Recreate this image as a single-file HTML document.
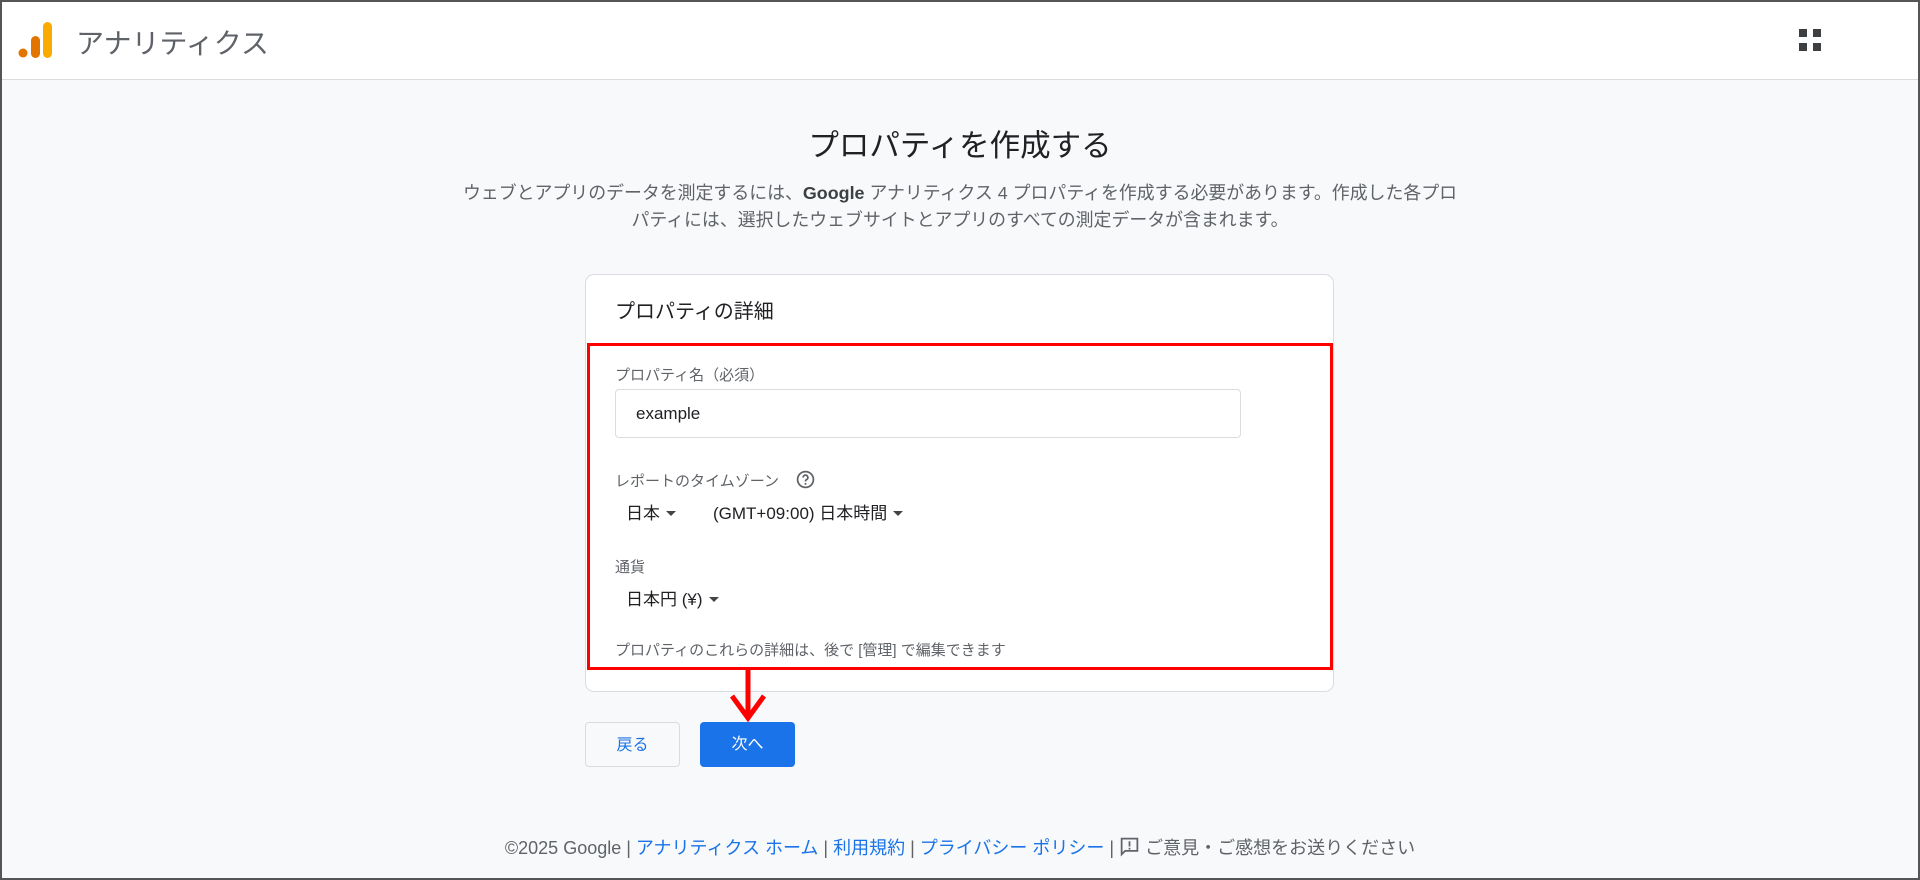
<!DOCTYPE html>
<html><head><meta charset="utf-8"><style>
*{box-sizing:border-box;margin:0;padding:0}
body{width:1920px;height:880px;background:#f8f9fa;font-family:"Liberation Sans","Noto Sans CJK JP",sans-serif;position:relative;overflow:hidden;color:#202124}
.frame{position:absolute;inset:0;border:2px solid #555;pointer-events:none;z-index:9}
.hdr{position:absolute;left:0;top:0;width:1920px;height:80px;background:#fff;border-bottom:1px solid #dadce0}
.abs{position:absolute;white-space:nowrap}
.card{position:absolute;left:585px;top:274px;width:749px;height:418px;background:#fff;border:1px solid #dadce0;border-radius:9px}
.lbl{font-size:15px;color:#5f6368}
.dd{font-size:17px;color:#202124}
.car{display:inline-block;width:0;height:0;border-left:5px solid transparent;border-right:5px solid transparent;border-top:5px solid #444;vertical-align:middle;margin-left:6px;margin-top:-3px}
.btn{position:absolute;top:722px;width:95px;height:45px;border-radius:4px;font-size:16px;text-align:center;line-height:45px}
a{color:#1a73e8;text-decoration:none}
</style></head><body>
<div class="frame"></div>
<div class="hdr">
<svg class="abs" style="left:18px;top:21px" width="36" height="38" viewBox="0 0 36 38"><circle cx="5" cy="32" r="4.5" fill="#e37400"/><rect x="13" y="15" width="9" height="22" rx="4.5" fill="#e37400"/><rect x="25" y="1" width="9" height="36" rx="4.5" fill="#f9ab00"/></svg>
<div class="abs" style="left:76px;top:22px;font-size:28px;color:#5f6368">アナリティクス</div>
<svg class="abs" style="left:1799px;top:29px" width="22" height="22"><rect x="0" y="0" width="8" height="8" fill="#3c4043"/><rect x="14" y="0" width="8" height="8" fill="#3c4043"/><rect x="0" y="14" width="8" height="8" fill="#3c4043"/><rect x="14" y="14" width="8" height="8" fill="#3c4043"/></svg>
</div>
<div class="abs" style="left:0;width:1920px;text-align:center;top:121px;font-size:30.5px;color:#202124">プロパティを作成する</div>
<div class="abs" style="left:0;width:1920px;text-align:center;top:180px;font-size:17.9px;line-height:27px;color:#5f6368;white-space:normal">ウェブとアプリのデータを測定するには、<b style="font-weight:bold;color:#3c4043">Google</b> アナリティクス 4 プロパティを作成する必要があります。作成した各プロ<br>パティには、選択したウェブサイトとアプリのすべての測定データが含まれます。</div>
<div class="card"></div>
<div class="abs" style="left:615px;top:295px;font-size:20px">プロパティの詳細</div>
<div class="abs" style="left:587px;top:343px;width:746px;height:327px;border:3px solid #f00"></div>
<div class="abs lbl" style="left:615px;top:364px">プロパティ名（必須）</div>
<div class="abs" style="left:615px;top:389px;width:626px;height:49px;border:1px solid #dadce0;border-radius:4px;font-size:17px;padding:14px 0 0 20px">example</div>
<div class="abs lbl" style="left:615px;top:470px">レポートのタイムゾーン</div>
<svg class="abs" style="left:796px;top:470px" width="19" height="19" viewBox="0 0 24 24"><circle cx="12" cy="12" r="10" fill="none" stroke="#5f6368" stroke-width="2.2"/><path d="M9 9.5a3 3 0 1 1 4.2 2.7c-.8.4-1.2 1-1.2 1.8v.5" fill="none" stroke="#5f6368" stroke-width="2.2"/><circle cx="12" cy="17.5" r="1.3" fill="#5f6368"/></svg>
<div class="abs dd" style="left:626px;top:499px">日本<span class="car"></span></div>
<div class="abs dd" style="left:713px;top:499px">(GMT+09:00) 日本時間<span class="car"></span></div>
<div class="abs lbl" style="left:615px;top:556px">通貨</div>
<div class="abs dd" style="left:626px;top:585px">日本円 (¥)<span class="car"></span></div>
<div class="abs lbl" style="left:615px;top:639px">プロパティのこれらの詳細は、後で [管理] で編集できます</div>
<svg class="abs" style="left:726px;top:668px" width="44" height="58"><path d="M22 0V50M6 28L22 50L38 28" fill="none" stroke="#f00" stroke-width="5"/></svg>
<div class="btn" style="left:585px;border:1px solid #dadce0;background:#f8f9fa;color:#1a73e8">戻る</div>
<div class="btn" style="left:700px;background:#1a73e8;color:#fff">次へ</div>
<div class="abs" style="left:0;width:1920px;text-align:center;top:834px;font-size:18px;color:#5f6368">©2025 Google | <a>アナリティクス ホーム</a> | <a>利用規約</a> | <a>プライバシー ポリシー</a> | <svg width="21" height="21" viewBox="0 0 24 24" style="vertical-align:-3px"><path d="M3 3h18v14H7l-4 4z" fill="none" stroke="#5f6368" stroke-width="2"/><rect x="11" y="6" width="2" height="6" fill="#5f6368"/><rect x="11" y="13.5" width="2" height="2" fill="#5f6368"/></svg> ご意見・ご感想をお送りください</div>
</body></html>
